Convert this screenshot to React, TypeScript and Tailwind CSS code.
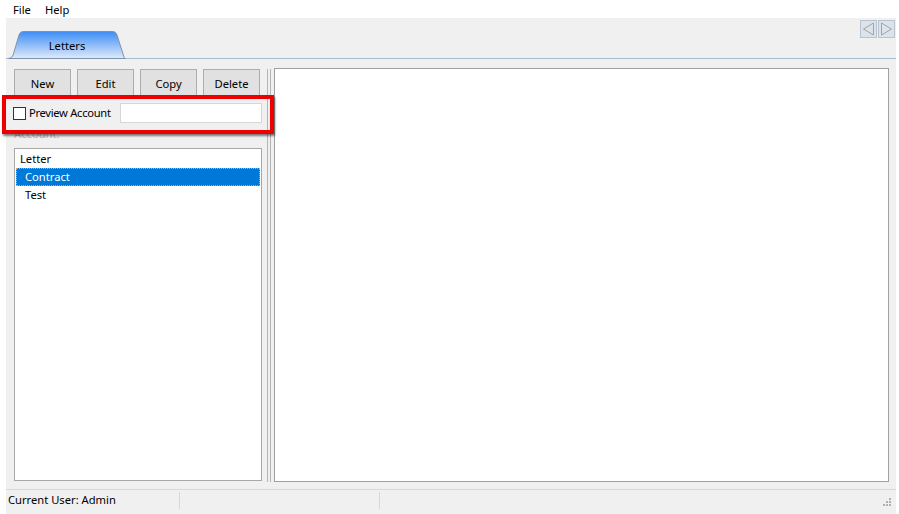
import React from 'react';

// ── Small pieces ────────────────────────────────────────────────────────

function ToolButton({ label }: { label: string }) {
  return (
    <button className="w-[57px] h-[28px] bg-[#e1e1e1] border border-[#adadad] text-[11.2px] text-black pt-[3px]">
      {label}
    </button>
  );
}

function LettersTab() {
  return (
    <div className="relative w-[118px] h-[28px] -mb-px">
      <svg className="absolute inset-0" width="118" height="28" viewBox="0 0 118 28">
        <defs>
          <linearGradient id="tabFill" x1="0" y1="0" x2="0" y2="1">
            <stop offset="0" stopColor="#3d8ef5" />
            <stop offset="1" stopColor="#dfeafa" />
          </linearGradient>
        </defs>
        <path
          d="M0.5 27.5 C4 27 5 25 6 21 L11 4 C12 1.5 13 0.5 16 0.5 L104 0.5 C107 0.5 108 1.5 109 4 L116 26 C116.5 27 117 27.5 117.5 27.5 Z"
          fill="url(#tabFill)"
          stroke="#7f93ad"
        />
      </svg>
      <span className="relative flex h-full items-center justify-center pt-[2px] text-[11.2px] text-black">Letters</span>
    </div>
  );
}

function ScrollArrow({ dir }: { dir: 'left' | 'right' }) {
  return (
    <div className="w-[17px] h-[18px] bg-[#dde3ea] border border-[#b9c3cf] flex items-center justify-center">
      <svg width="13" height="14" viewBox="0 0 13 14">
        {dir === 'left' ? (
          <path d="M11.5 1 L1.5 7 L11.5 13 Z" fill="none" stroke="#a3a3a3" />
        ) : (
          <path d="M1.5 1 L11.5 7 L1.5 13 Z" fill="none" stroke="#a3a3a3" />
        )}
      </svg>
    </div>
  );
}

// ── Data ────────────────────────────────────────────────────────────────

const letters = [
  { name: 'Letter', indent: false },
  { name: 'Contract', indent: true },
  { name: 'Test', indent: true },
];

// ── Page ────────────────────────────────────────────────────────────────

export default function App() {
  const selected = 'Contract';

  return (
    <div className="w-[899px] h-[514px] bg-white overflow-hidden font-['Segoe_UI','Noto_Sans',sans-serif] text-black text-[11.2px]">
      {/* menu */}
      <div className="h-[18px] flex items-center pl-[13px] gap-[14px] pt-[2px]">
        <span>File</span>
        <span>Help</span>
      </div>

      <div className="ml-[6px] mr-[3px] h-[496px] bg-[#f0f0f0] flex flex-col">
        {/* tab strip */}
        <div className="relative h-[41px] shrink-0 flex items-end pl-[2px] border-b border-[#a9bbd1]">
          <LettersTab />
          <div className="absolute right-[1px] top-[2px] flex gap-[1px]">
            <ScrollArrow dir="left" />
            <ScrollArrow dir="right" />
          </div>
        </div>

        {/* body */}
        <div className="relative flex shrink-0 pl-[8px] pt-[9px] h-[430px]">
          <div className="w-[248px] flex flex-col">
            <div className="flex gap-[6px] mt-[1px]">
              {['New', 'Edit', 'Copy', 'Delete'].map((b) => (
                <ToolButton key={b} label={b} />
              ))}
            </div>

            <div className="flex items-center mt-[6px] h-[20px]">
              <span className="shrink-0 w-[13px] h-[13px] border border-[#333] bg-white ml-[-1px]" />
              <span className="ml-[3px] whitespace-nowrap tracking-[-0.3px] pt-[1px]">Preview Account</span>
              <div className="ml-auto shrink-0 w-[142px] h-[20px] bg-white border border-[#d6d6d6]" />
            </div>

            <div className="mt-[4px] text-[#b8b8b8] leading-[14px]">Account:</div>

            <div className="mt-[7px] h-[333px] bg-white border border-[#a8a8a8] py-[1px] px-[1px]">
              {letters.map((l) =>
                l.name === selected ? (
                  <div
                    key={l.name}
                    className="h-[18px] flex items-center pl-[8px] pt-[1px] bg-[#0078d7] text-white border border-dotted border-[#f0a050]"
                  >
                    {l.name}
                  </div>
                ) : (
                  <div key={l.name} className={`h-[18px] flex items-center pt-[1px] ${l.indent ? 'pl-[9px]' : 'pl-[4px]'}`}>
                    {l.name}
                  </div>
                ),
              )}
            </div>
          </div>

          {/* splitter */}
          <div className="flex h-[413px] mt-[1px] ml-[5px] gap-[2px]">
            <div className="w-px bg-[#b4b4b4]" />
            <div className="w-px bg-[#b4b4b4]" />
          </div>

          <div className="ml-[3px] w-[615px] h-[414px] bg-white border border-[#a0a0a0]" />

          {/* highlight drawn over the preview row */}
          <div className="absolute left-[-4px] top-[36px] w-[272px] h-[39px] border-[4px] border-[#ee0000] shadow-[1px_2px_2px_rgba(0,0,0,0.5)]" />
        </div>

        {/* status bar */}
        <div className="flex-1 flex border-t border-[#d7d7d7] pt-[2px]">
          <div className="w-[174px] pl-[2px] border-r border-[#d7d7d7] h-[17px] whitespace-nowrap">Current User: Admin</div>
          <div className="w-[200px] border-r border-[#d7d7d7] h-[17px]" />
          <div className="flex-1 relative">
            <svg className="absolute right-[4px] top-[5px]" width="10" height="10" viewBox="0 0 10 10">
              <rect x="7" y="1" width="2" height="2" fill="#b0b0b0" />
              <rect x="4" y="4" width="2" height="2" fill="#b0b0b0" />
              <rect x="7" y="4" width="2" height="2" fill="#b0b0b0" />
              <rect x="1" y="7" width="2" height="2" fill="#b0b0b0" />
              <rect x="4" y="7" width="2" height="2" fill="#b0b0b0" />
              <rect x="7" y="7" width="2" height="2" fill="#b0b0b0" />
            </svg>
          </div>
        </div>
      </div>
    </div>
  );
}
